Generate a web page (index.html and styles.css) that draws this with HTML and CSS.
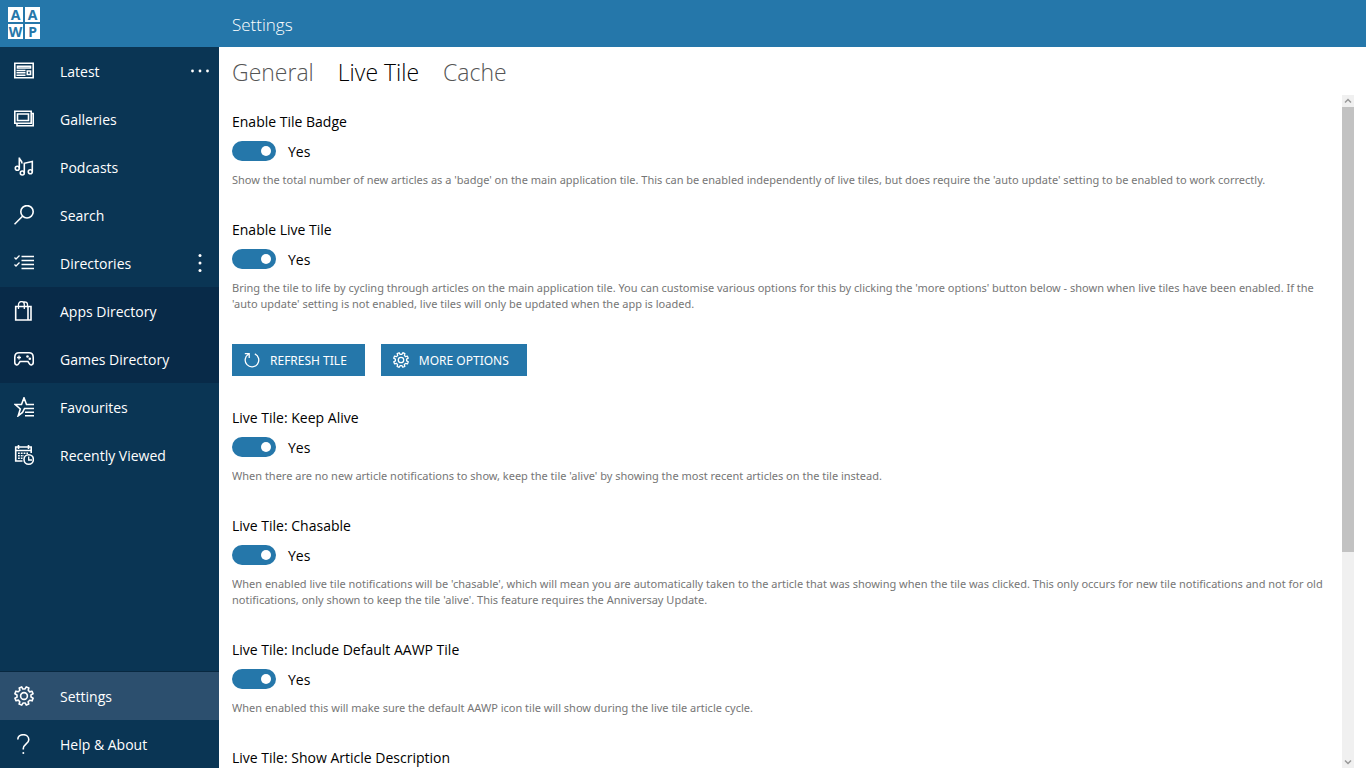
FILE: index.html
```html
<!DOCTYPE html>
<html lang="en">
<head>
    <meta charset="UTF-8">
    <meta name="viewport" content="width=device-width, initial-scale=1">
    <title>AAWP - Settings</title>
    <link rel="stylesheet" href="styles.css">
</head>
<body>
    <header class="topbar">
        <div class="logo"><span>A</span><span>A</span><span>W</span><span>P</span></div>
        <h1>Settings</h1>
    </header>

    <div class="layout">
        <nav class="sidebar">
            <div class="nav-row">
                <a class="nav-item" href="#">
                    <svg class="icon" viewBox="0 0 20 20"><path d="M.8 2.300h18.400v14.400H.8zM3.500 5.200h13v1.800h-13zM2.500 9.500h9M2.500 11.800h9M2.500 14.200h9M13.300 10h3.200v3.500h-3.200z"/></svg>
                    Latest
                </a>
                <button class="more" aria-label="More">
                    <svg class="dots" viewBox="0 0 20 20"><circle cx="2.5" cy="10" r="1.4"/><circle cx="10" cy="10" r="1.4"/><circle cx="17.5" cy="10" r="1.4"/></svg>
                </button>
            </div>
            <a class="nav-item" href="#">
                <svg class="icon" viewBox="0 0 20 20"><path d="M.8 2.300h16.400v11.900H.8zM3.500 5h11v6.500h-11zM17.500 4.500h1.700v12.200H3V14.500"/></svg>
                Galleries
            </a>
            <a class="nav-item" href="#">
                <svg class="icon" viewBox="0 0 20 20"><path d="M5.300 11.500V.5c0 2.800 2.700 2.500 2.700 6M10.300 16V6.300l8-1.800v10"/><circle cx="3.300" cy="11.200" r="2"/><circle cx="8.300" cy="16" r="2"/><circle cx="16.300" cy="14.700" r="2"/></svg>
                Podcasts
            </a>
            <a class="nav-item" href="#">
                <svg class="icon" viewBox="0 0 20 20"><circle cx="13" cy="6.800" r="6.200"/><path d="M8.500 11.300L.5 19.300"/></svg>
                Search
            </a>
            <div class="nav-row">
                <a class="nav-item" href="#">
                    <svg class="icon" viewBox="0 0 20 20"><path d="M7.500 3.500H20M7.500 7.500H20M7.500 11.500H20M7.500 15.500H20"/><path class="thin" d="M.5 4.500L2 6l3.500-3.500M.5 11.500L2 13l3.500-3.500"/></svg>
                    Directories
                </a>
                <button class="more" aria-label="Collapse directories">
                    <svg class="dots" viewBox="0 0 20 20"><circle cx="10" cy="2.5" r="1.5"/><circle cx="10" cy="10" r="1.5"/><circle cx="10" cy="17.5" r="1.5"/></svg>
                </button>
            </div>
            <div class="submenu">
                <a class="nav-item" href="#">
                    <svg class="icon" viewBox="0 0 20 20"><path d="M1.700 5.500h12.300v13.500H1.700zM14 5.500h3v13.500h-3"/><path class="thin" d="M4.500 8V3.500a2.700 2.700 0 0 1 5.800 0V8M7.800.8h2.700c1.800 0 3 1 3 2.700v2"/></svg>
                    Apps Directory
                </a>
                <a class="nav-item" href="#">
                    <svg class="icon" viewBox="0 0 20 20"><path d="M5 3.800h10c2.500 0 4.100 1.700 4.200 4.200l.1 5c0 3-2.600 4-4 1.600l-1.300-2.100H6l-1.300 2.100C3.300 17 .7 16 .7 13l.1-5C.9 5.500 2.500 3.800 5 3.800z"/><path class="thin" d="M3 8.500h4M5 6.500v4"/><circle class="fill" cx="13.500" cy="7.500" r="1.300"/><circle class="fill" cx="15.800" cy="9.700" r="1.300"/></svg>
                    Games Directory
                </a>
            </div>
            <a class="nav-item" href="#">
                <svg class="icon" viewBox="0 0 20 20"><path d="M20 7.500h-7.500L10 .8 7.500 7.500H1.200L6.300 12l-2.100 6.800L8.500 15.500l2-4H20M11 15.300h9M11 18.800h9"/></svg>
                Favourites
            </a>
            <a class="nav-item" href="#">
                <svg class="icon" viewBox="0 0 20 20"><path d="M8.500 16H1.700V2h15.500v6M1.700 5.500h15.500M4.500 0v4M14.500 0v4"/><path class="thin" d="M14.700 11.500V15H18"/><path d="M4 8.300h10M4 10.800h6M4 13.300h4.500" stroke-dasharray="1.800 1"/><circle cx="14.700" cy="14.500" r="4.700"/></svg>
                Recently Viewed
            </a>

            <div class="nav-bottom">
                <a class="nav-item active" href="#">
                    <svg class="icon" viewBox="0 0 20 20"><use href="#gear"/></svg>
                    Settings
                </a>
                <a class="nav-item" href="#">
                    <svg class="icon" viewBox="0 0 20 20"><path d="M3.800 5.500C3.800 2.500 6.300.7 9.300.7s5.500 1.900 5.500 5c0 4-5.500 4.300-5.500 8.800v1"/><circle class="fill" cx="9.300" cy="19" r="1"/></svg>
                    Help &amp; About
                </a>
            </div>
        </nav>

        <main class="main">
            <div class="tabs" role="tablist">
                <button class="tab" role="tab">General</button>
                <button class="tab selected" role="tab" aria-selected="true">Live Tile</button>
                <button class="tab" role="tab">Cache</button>
            </div>

            <div class="panel">
                <div class="content">
                    <section class="setting">
                        <h2>Enable Tile Badge</h2>
                        <label class="switch"><input type="checkbox" aria-label="Enable Tile Badge" checked>Yes</label>
                        <p>Show the total number of new articles as a 'badge' on the main application tile. This can be enabled independently of live tiles, but does require the 'auto update' setting to be enabled to work correctly.</p>
                    </section>

                    <section class="setting">
                        <h2>Enable Live Tile</h2>
                        <label class="switch"><input type="checkbox" aria-label="Enable Live Tile" checked>Yes</label>
                        <p>Bring the tile to life by cycling through articles on the main application tile. You can customise various options for this by clicking the 'more options' button below - shown when live tiles have been enabled. If the<br>'auto update' setting is not enabled, live tiles will only be updated when the app is loaded.</p>
                    </section>

                    <div class="actions">
                        <button class="btn">
                            <svg class="icon" viewBox="0 0 20 20"><path d="M13.500 2.300a8.500 8.500 0 1 1-8 .5M1 2h5.500v5.500"/></svg>
                            REFRESH TILE
                        </button>
                        <button class="btn">
                            <svg class="icon" viewBox="0 0 20 20"><use href="#gear"/></svg>
                            MORE OPTIONS
                        </button>
                    </div>

                    <section class="setting">
                        <h2>Live Tile: Keep Alive</h2>
                        <label class="switch"><input type="checkbox" aria-label="Live Tile: Keep Alive" checked>Yes</label>
                        <p>When there are no new article notifications to show, keep the tile 'alive' by showing the most recent articles on the tile instead.</p>
                    </section>

                    <section class="setting">
                        <h2>Live Tile: Chasable</h2>
                        <label class="switch"><input type="checkbox" aria-label="Live Tile: Chasable" checked>Yes</label>
                        <p>When enabled live tile notifications will be 'chasable', which will mean you are automatically taken to the article that was showing when the tile was clicked. This only occurs for new tile notifications and not for old<br>notifications, only shown to keep the tile 'alive'. This feature requires the Anniversay Update.</p>
                    </section>

                    <section class="setting">
                        <h2>Live Tile: Include Default AAWP Tile</h2>
                        <label class="switch"><input type="checkbox" aria-label="Live Tile: Include Default AAWP Tile" checked>Yes</label>
                        <p>When enabled this will make sure the default AAWP icon tile will show during the live tile article cycle.</p>
                    </section>

                    <section class="setting">
                        <h2>Live Tile: Show Article Description</h2>
                    </section>
                </div>

                <div class="scrollbar">
                    <button aria-label="Scroll up"><svg viewBox="0 0 12 12"><path d="M3 7.500l3-3 3 3"/></svg></button>
                    <div class="track"><div class="thumb"></div></div>
                    <button aria-label="Scroll down"><svg viewBox="0 0 12 12"><path d="M3 4.500l3 3 3-3"/></svg></button>
                </div>
            </div>
        </main>
    </div>

    <!-- shared gear shape -->
    <svg class="defs" aria-hidden="true">
        <symbol id="gear" viewBox="0 0 20 20">
            <path transform="rotate(22.5 10 10)" stroke-linejoin="round" d="M8.300 3.100L8.600.7h2.800l.3 2.400 2 .9 1.900-1.500 1.900 1.900L16 6.300l.9 2 2.400.3v2.800l-2.400.3-.9 2 1.500 1.900-1.900 1.900-1.900-1.500-2 .9-.3 2.400H8.600l-.3-2.400-2-.9-1.900 1.500-1.900-1.900L4 13.700l-.9-2-2.400-.3V8.600l2.400-.3.9-2-1.500-1.900 1.900-1.900L6.300 4z"/>
            <circle cx="10" cy="10" r="3.400"/>
        </symbol>
    </svg>
</body>
</html>
```
FILE: styles.css
```css
* {
    box-sizing: border-box;
}

body {
    display: flex;
    flex-direction: column;
    height: 100vh;
    margin: 0;
    overflow: hidden;
    font-family: "Open Sans", "Noto Sans", sans-serif;
    font-size: 14px;
    color: #000;
    background: #fff;
}

h1, h2, p {
    margin: 0;
    font-weight: 400;
}

button {
    padding: 0;
    border: none;
    background: none;
    font-family: inherit;
    cursor: pointer;
}

.defs {
    display: none;
}

/* top bar */
.topbar {
    display: flex;
    align-items: center;
    height: 47px;
    flex-shrink: 0;
    padding-left: 8px;
    background: #2577aa;
    color: #fff;
}

.topbar h1 {
    margin-left: 192px;
    padding-top: 2px;
    font-size: 17px;
    font-weight: 300;
    line-height: 24px;
}

.logo {
    display: grid;
    grid-template-columns: 15px 15px;
    grid-auto-rows: 15px;
    gap: 2px;
    padding-bottom: 1px;
}

.logo span {
    background: #fff;
    color: #2577aa;
    font-family: "Noto Sans", sans-serif;
    font-size: 14px;
    font-weight: 700;
    line-height: 16px;
    text-align: center;
}

/* sidebar */
.layout {
    display: flex;
    flex: 1;
    min-height: 0;
}

.sidebar {
    display: flex;
    flex-direction: column;
    width: 219px;
    flex-shrink: 0;
    background: #0a3554;
    color: #fff;
}

.nav-row {
    display: flex;
}

.nav-item {
    display: flex;
    flex: 1 0 auto;
    align-items: center;
    gap: 26px;
    height: 48px;
    max-height: 48px;
    padding-left: 14px;
    color: #fff;
    text-decoration: none;
}

.icon {
    width: 20px;
    height: 20px;
    fill: none;
    stroke: #fff;
    stroke-width: 1.6;
}

.icon .thin {
    stroke-width: 1.3;
}

.icon .fill,
.dots {
    fill: #fff;
    stroke: none;
}

.more {
    display: flex;
    align-items: center;
    padding-right: 9px;
}

.dots {
    width: 20px;
    height: 20px;
}

.submenu {
    background: #082a48;
}

.nav-bottom {
    margin-top: auto;
    border-top: 1px solid #082840;
}

.active {
    background: #2c4f6e;
}

/* main area */
.main {
    display: flex;
    flex: 1;
    flex-direction: column;
    min-width: 0;
    padding-left: 13px;
}

.tabs {
    display: flex;
    gap: 24px;
    height: 48px;
    flex-shrink: 0;
    padding-top: 2px;
}

.tab {
    font-size: 23px;
    font-weight: 300;
    color: #555;
}

.tab.selected {
    color: #000;
}

.panel {
    display: flex;
    flex: 1;
    min-height: 0;
    padding-right: 12px;
}

.content {
    display: flex;
    flex: 1;
    flex-direction: column;
    gap: 32px;
    min-width: 0;
    padding-top: 17px;
    overflow: hidden;
}

.setting h2 {
    font-size: 14px;
    line-height: 20px;
}

.setting p {
    margin-top: 11px;
    font-family: "Noto Sans", sans-serif;
    font-size: 11px;
    line-height: 16px;
    color: #767676;
    white-space: nowrap;
}

.switch {
    display: flex;
    align-items: center;
    gap: 12px;
    height: 20px;
    margin-top: 9px;
}

.switch input {
    display: flex;
    align-items: center;
    justify-content: flex-end;
    width: 44px;
    height: 20px;
    margin: 0;
    padding-right: 5px;
    border-radius: 10px;
    background: #2577aa;
    appearance: none;
}

.switch input::before {
    content: "";
    width: 10px;
    height: 10px;
    border-radius: 50%;
    background: #fff;
}

.actions {
    display: flex;
    gap: 16px;
}

.btn {
    display: flex;
    align-items: center;
    gap: 10px;
    height: 32px;
    padding: 0 18px 0 12px;
    background: #2577aa;
    color: #fff;
    font-family: "Noto Sans", sans-serif;
    font-size: 12px;
}

.btn .icon {
    width: 16px;
    height: 16px;
}

/* scrollbar */
.scrollbar {
    display: flex;
    flex-direction: column;
    width: 12px;
    background: #f0f0f0;
}

.scrollbar button {
    height: 12px;
}

.scrollbar svg {
    display: block;
    width: 12px;
    height: 12px;
    fill: none;
    stroke: #999;
    stroke-width: 1.5;
}

.track {
    flex: 1;
}

.thumb {
    height: 68.5%;
    background: #c2c2c2;
}
```
